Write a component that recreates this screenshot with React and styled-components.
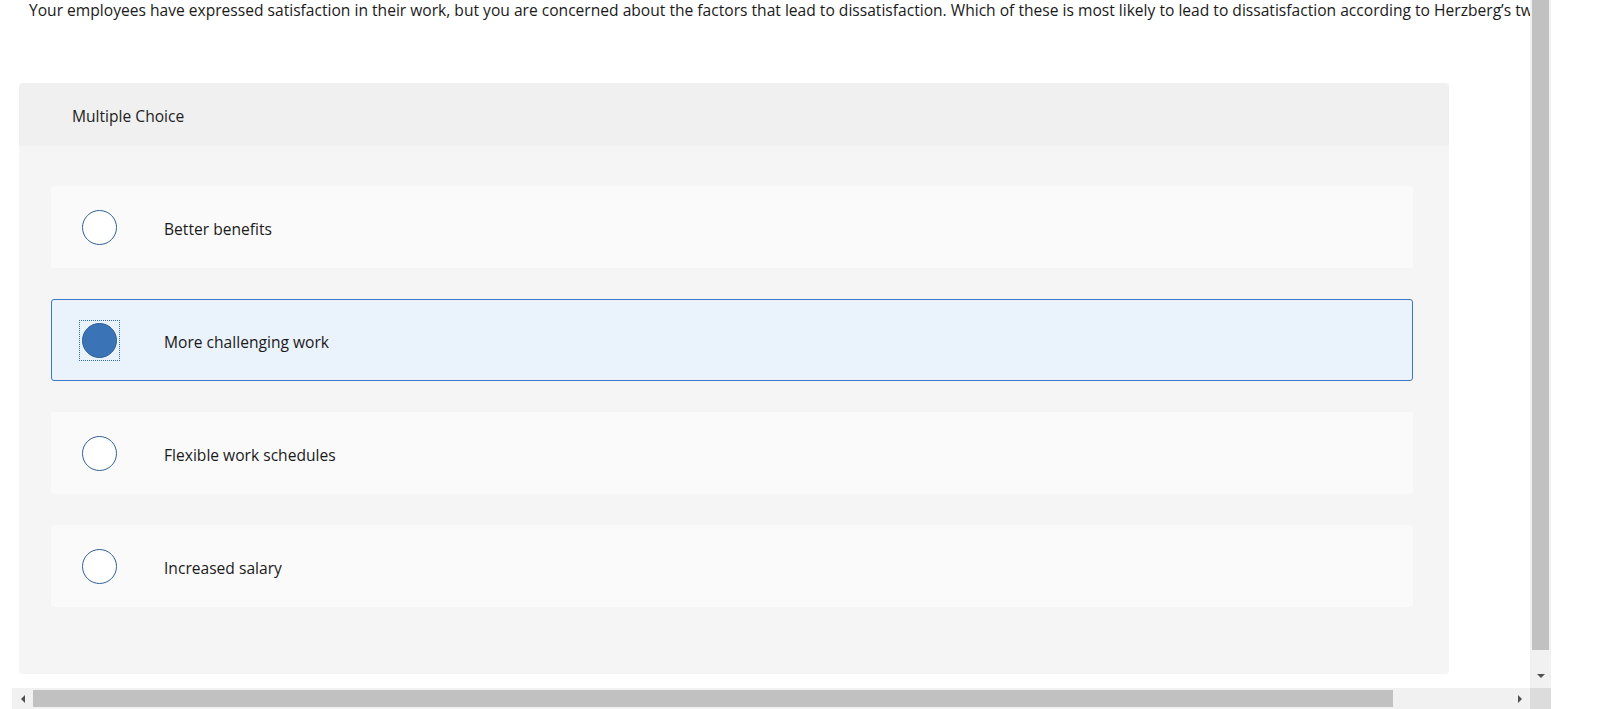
import React from 'react';
import styled, { createGlobalStyle } from 'styled-components';

const GlobalStyle = createGlobalStyle`
    html, body {
        margin: 0;
        padding: 0;
        background: #ffffff;
    }
    body {
        font-family: "Open Sans", "Liberation Sans", Arial, sans-serif;
        color: #1a1a1a;
    }
`;

const options = [
    'Better benefits',
    'More challenging work',
    'Flexible work schedules',
    'Increased salary',
];

const S = {
    Frame: styled.div`
        display: grid;
        grid-template-columns: 1530px 21px;
        grid-template-rows: 688px 21px;
        width: 1551px;
        height: 709px;
    `,
    Viewport: styled.div`
        overflow: hidden;
        display: flex;
        flex-flow: column;
    `,
    Question: styled.p`
        margin: 0;
        padding: 0 0 0 29px;
        font-size: 15.6px;
        line-height: 21px;
        white-space: nowrap;
        color: #1a1a1a;
    `,
    Card: styled.div`
        margin: 62px 0 0 19px;
        width: 1430px;
        height: 591px;
        border-radius: 4px;
        background-color: #f5f5f5;
        display: flex;
        flex-flow: column;
        overflow: hidden;
    `,
    CardHeader: styled.div`
        height: 63px;
        display: flex;
        align-items: center;
        padding: 2px 0 0 53px;
        box-sizing: border-box;
        background-color: #f0f0f0;
        font-size: 15.6px;
        color: #222;
    `,
    OptionList: styled.div`
        display: flex;
        flex-flow: column;
        gap: 31px;
        padding: 40px 36px 0 32px;
    `,
    Option: styled.div`
        display: flex;
        align-items: center;
        height: 82px;
        box-sizing: border-box;
        padding-left: ${p => (p.$selected ? 27 : 28)}px;
        border-radius: 3px;
        border: ${p => (p.$selected ? '1px solid #3b78c2' : 'none')};
        background-color: ${p => (p.$selected ? '#eaf2fb' : '#fafafa')};
        cursor: pointer;
    `,
    RadioFocus: styled.span`
        flex: 0 0 auto;
        display: flex;
        align-items: center;
        justify-content: center;
        width: 41px;
        height: 41px;
        box-sizing: border-box;
        border: 1.5px dotted ${p => (p.$selected ? '#2f6cb8' : 'transparent')};
    `,
    Radio: styled.span`
        width: 35px;
        height: 35px;
        box-sizing: border-box;
        border-radius: 50%;
        border: 1.5px solid ${p => (p.$selected ? '#2c5e96' : '#2f6198')};
        background-color: ${p => (p.$selected ? '#3a74b7' : '#ffffff')};
    `,
    Label: styled.span`
        margin-left: 44px;
        padding-top: 3px;
        font-size: 15.6px;
        color: #1a1a1a;
    `,
    VTrack: styled.div`
        background-color: #f1f1f1;
        display: flex;
        flex-flow: column;
        align-items: center;
    `,
    VThumb: styled.div`
        width: 17px;
        height: 650px;
        background-color: #c1c1c1;
    `,
    DownBox: styled.div`
        flex: 1 0;
        display: flex;
        align-items: center;
        justify-content: center;
        padding-top: 14px;
    `,
    SideBox: styled.div`
        flex: 0 0 21px;
        height: 21px;
        display: flex;
        align-items: center;
        justify-content: center;
        margin-left: ${p => (p.$end ? 'auto' : '0')};
    `,
    HTrack: styled.div`
        margin-left: 12px;
        background-color: #f1f1f1;
        display: flex;
        align-items: center;
    `,
    HThumb: styled.div`
        width: 1360px;
        height: 17px;
        background-color: #c1c1c1;
    `,
    Corner: styled.div`
        background-color: #dcdcdc;
    `,
};

const Arrow = ({ dir }) => {
    const pts = {
        down: '0,0 8,0 4,4',
        left: '4,0 4,8 0,4',
        right: '0,0 0,8 4,4',
    }[dir];
    const w = dir === 'down' ? 8 : 4;
    const h = dir === 'down' ? 4 : 8;
    return (
        <svg width={w} height={h} viewBox={`0 0 ${w} ${h}`}>
            <polygon points={pts} fill="#505050" />
        </svg>
    );
};

export default function App() {
    return (
        <>
            <GlobalStyle />
            <S.Frame>
                <S.Viewport>
                    <S.Question>
                        Your employees have expressed satisfaction in their work, but you are concerned about the factors that lead to dissatisfaction. Which of these is most likely to lead to dissatisfaction according to Herzberg’s two-factor theory?
                    </S.Question>
                    <S.Card>
                        <S.CardHeader>Multiple Choice</S.CardHeader>
                        <S.OptionList>
                            {options.map((text, i) => (
                                <S.Option key={text} $selected={i === 1}>
                                    <S.RadioFocus $selected={i === 1}>
                                        <S.Radio $selected={i === 1} />
                                    </S.RadioFocus>
                                    <S.Label>{text}</S.Label>
                                </S.Option>
                            ))}
                        </S.OptionList>
                    </S.Card>
                </S.Viewport>
                <S.VTrack>
                    <S.VThumb />
                    <S.DownBox><Arrow dir="down" /></S.DownBox>
                </S.VTrack>
                <S.HTrack>
                    <S.SideBox><Arrow dir="left" /></S.SideBox>
                    <S.HThumb />
                    <S.SideBox $end><Arrow dir="right" /></S.SideBox>
                </S.HTrack>
                <S.Corner />
            </S.Frame>
        </>
    );
}
